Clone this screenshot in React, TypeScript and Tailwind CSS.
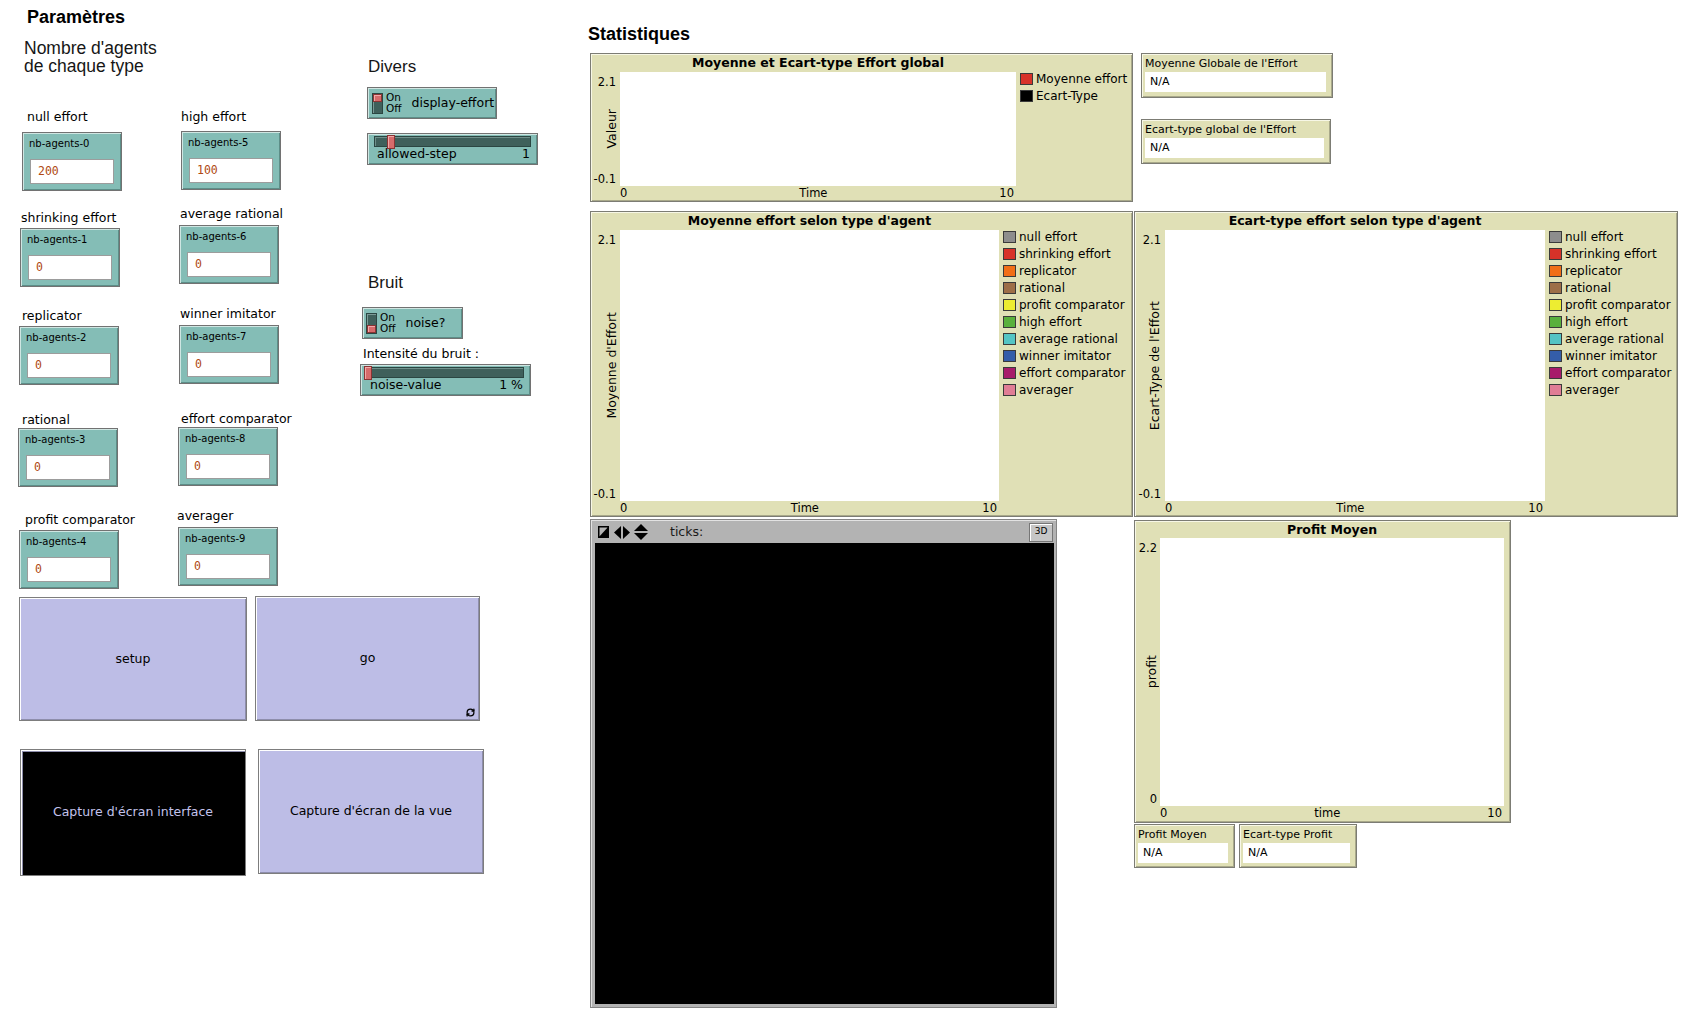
import { RefreshCw } from "lucide-react";

type AgentSpec = {
  title: string;
  name: string;
  value: string;
  labelCls: string;
  boxCls: string;
};

const leftAgents: AgentSpec[] = [
  { title: "null effort", name: "nb-agents-0", value: "200", labelCls: "mt-[34px] ml-[27px]", boxCls: "mt-[8px] ml-[22px]" },
  { title: "shrinking effort", name: "nb-agents-1", value: "0", labelCls: "mt-[20px] ml-[21px]", boxCls: "mt-[3px] ml-[20px]" },
  { title: "replicator", name: "nb-agents-2", value: "0", labelCls: "mt-[22px] ml-[22px]", boxCls: "mt-[3px] ml-[19px]" },
  { title: "rational", name: "nb-agents-3", value: "0", labelCls: "mt-[28px] ml-[22px]", boxCls: "mt-[1px] ml-[18px]" },
  { title: "profit comparator", name: "nb-agents-4", value: "0", labelCls: "mt-[26px] ml-[25px]", boxCls: "mt-[3px] ml-[19px]" },
];

const rightAgents: AgentSpec[] = [
  { title: "high effort", name: "nb-agents-5", value: "100", labelCls: "mt-[34px] ml-[4px]", boxCls: "mt-[7px] ml-[4px]" },
  { title: "average rational", name: "nb-agents-6", value: "0", labelCls: "mt-[17px] ml-[3px]", boxCls: "mt-[4px] ml-[2px]" },
  { title: "winner imitator", name: "nb-agents-7", value: "0", labelCls: "mt-[23px] ml-[3px]", boxCls: "mt-[4px] ml-[2px]" },
  { title: "effort comparator", name: "nb-agents-8", value: "0", labelCls: "mt-[28px] ml-[4px]", boxCls: "mt-[1px] ml-[1px]" },
  { title: "averager", name: "nb-agents-9", value: "0", labelCls: "mt-[23px] ml-[0px]", boxCls: "mt-[4px] ml-[1px]" },
];

// netlogo base colours, in the order of the plot pens
const agentPens: [string, string][] = [
  ["null effort", "bg-[#8d8d8d]"],
  ["shrinking effort", "bg-[#d73229]"],
  ["replicator", "bg-[#f16e17]"],
  ["rational", "bg-[#9d6e48]"],
  ["profit comparator", "bg-[#eded31]"],
  ["high effort", "bg-[#59b03c]"],
  ["average rational", "bg-[#54c4c4]"],
  ["winner imitator", "bg-[#345da9]"],
  ["effort comparator", "bg-[#a71b6a]"],
  ["averager", "bg-[#e07d95]"],
];

const teal = "bg-[#84bdb6] border border-[#727272] shadow-[inset_1px_1px_0_#cfe6e2,inset_-1px_-1px_0_#5d8e88]";
const khaki = "bg-[#e0e0b6] border border-[#7c7c74] shadow-[inset_1px_1px_0_#f7f7e6,inset_-1px_-1px_0_#a9a98a]";
const lilac = "bg-[#bdbde6] border border-[#7d7d7d] shadow-[inset_1px_1px_0_#ffffff,inset_-1px_-1px_0_#8e8eac]";

function AgentInput({ spec }: { spec: AgentSpec }) {
  return (
    <>
      <div className={`text-[12.5px] leading-[14px] whitespace-nowrap ${spec.labelCls}`}>{spec.title}</div>
      <div className={`w-[100px] h-[59px] ${teal} ${spec.boxCls}`}>
        <div className="pl-[6px] pt-[5px] text-[10px] leading-[12px]">{spec.name}</div>
        <div className="mx-[7px] mt-[9px] h-[25px] bg-white border border-[#9c9c9c] flex items-center pl-[7px] font-['DejaVu_Sans_Mono',monospace] text-[11.5px] text-[#b04a12]">
          {spec.value}
        </div>
      </div>
    </>
  );
}

function Toggle({ on }: { on: boolean }) {
  return (
    <div className="w-[11px] h-[21px] bg-[#3f605b] border border-[#2b4642] shadow-[inset_1px_1px_0_#7b9a96] flex flex-col">
      {on ? null : <div className="flex-1" />}
      <div className="h-[8px] bg-[#d66b6b] border border-[#8a3434] shadow-[inset_1px_1px_0_#f3a9a9]" />
    </div>
  );
}

function Switch({ on, name, className }: { on: boolean; name: string; className: string }) {
  return (
    <div className={`h-[32px] flex items-center ${teal} ${className}`}>
      <Toggle on={on} />
      <div className="ml-[3px] flex flex-col text-[10.5px] leading-[11.5px]">
        <span>On</span>
        <span>Off</span>
      </div>
      <div className="ml-[10px] text-[12.5px] leading-[14px]">{name}</div>
    </div>
  );
}

function Slider({ name, value, knobCls, className }: { name: string; value: string; knobCls: string; className: string }) {
  return (
    <div className={`h-[32px] w-[171px] ${teal} ${className}`}>
      <div className="relative mx-[6px] mt-[2px] h-[11px] bg-[#3f605b] border border-[#2b4642] shadow-[inset_1px_1px_0_#6f8f8a]">
        <div className={`absolute top-[-2px] w-[8px] h-[14px] bg-[#d66b6b] border border-[#8a3434] shadow-[inset_1px_1px_0_#f3a9a9] ${knobCls}`} />
      </div>
      <div className="mt-[0px] pl-[9px] pr-[7px] flex justify-between text-[12.5px] leading-[14px]">
        <span>{name}</span>
        <span>{value}</span>
      </div>
    </div>
  );
}

type PlotProps = {
  title: string;
  box: string;
  yCol: string;
  area: string;
  titleRow: string;
  yLabel: string;
  yLabelPad: string;
  tickPad: string;
  yMax: string;
  yMin: string;
  xLabel: string;
  legend?: [string, string][];
  className?: string;
};

function Plot(p: PlotProps) {
  return (
    <div className={`${p.box} ${khaki} flex flex-col ${p.className ?? ""}`}>
      <div className={`flex ${p.titleRow}`}>
        <div className={p.yCol} />
        <div className={`${p.area.split(" ")[0]} pt-[2px] text-center font-bold text-[12.5px] leading-[14px] whitespace-nowrap`}>
          {p.title}
        </div>
      </div>
      <div className="flex">
        <div className={`grid ${p.yCol}`}>
          <div className={`col-start-1 row-start-1 flex items-center ${p.yLabelPad}`}>
            <span className="[writing-mode:vertical-rl] rotate-180 text-[12.5px] leading-[14px] whitespace-nowrap">{p.yLabel}</span>
          </div>
          <div className={`col-start-1 row-start-1 flex flex-col justify-between items-end pt-[3px] text-[11.5px] leading-[14px] ${p.tickPad}`}>
            <span>{p.yMax}</span>
            <span>{p.yMin}</span>
          </div>
        </div>
        <div className={`${p.area} bg-white`} />
        {p.legend ? (
          <div className="ml-[4px] mt-[-2px] flex flex-col">
            {p.legend.map(([label, color]) => (
              <div key={label} className="h-[17px] flex items-center">
                <div className={`w-[13px] h-[12px] border border-[#3a3a3a] ${color}`} />
                <span className="ml-[3px] text-[12px] leading-[14px] whitespace-nowrap">{label}</span>
              </div>
            ))}
          </div>
        ) : null}
      </div>
      <div className="flex">
        <div className={p.yCol} />
        <div className={`${p.area.split(" ")[0]} pr-[2px] flex justify-between text-[11.5px] leading-[14px]`}>
          <span>0</span>
          <span>{p.xLabel}</span>
          <span>10</span>
        </div>
      </div>
    </div>
  );
}

function Monitor({ label, className }: { label: string; className: string }) {
  return (
    <div className={`${khaki} ${className}`}>
      <div className="pl-[3px] pt-[3px] text-[11px] leading-[13px] whitespace-nowrap">{label}</div>
      <div className="ml-[3px] mr-[6px] mt-[2px] h-[20px] bg-white pl-[5px] flex items-center text-[11px]">N/A</div>
    </div>
  );
}

function ViewHeader() {
  return (
    <div className="h-[22px] flex items-center">
      <svg className="ml-[3px]" width="11" height="12" viewBox="0 0 11 12">
        <rect x="0.75" y="0.75" width="9.5" height="10.5" fill="none" stroke="#000" strokeWidth="1.5" />
        <polygon points="11,0 11,12 0,12" fill="#000" />
      </svg>
      <svg className="ml-[5px]" width="16" height="13" viewBox="0 0 16 13">
        <polygon points="7,0 7,13 0,6.5" fill="#000" />
        <polygon points="9,0 9,13 16,6.5" fill="#000" />
      </svg>
      <svg className="ml-[4px]" width="14" height="16" viewBox="0 0 14 16">
        <polygon points="0,7 14,7 7,0" fill="#000" />
        <polygon points="0,9 14,9 7,16" fill="#000" />
      </svg>
      <span className="ml-[22px] text-[12.5px] leading-[14px] text-[#1a1a1a]">ticks:</span>
      <div className="flex-1" />
      <div className="mr-[1px] w-[24px] h-[19px] bg-[#c6c6c6] border border-[#767676] shadow-[inset_1px_1px_0_#ffffff] flex items-center justify-center text-[9px]">
        3D
      </div>
    </div>
  );
}

export default function App() {
  return (
    <div className="w-[1688px] h-[1020px] bg-white flex overflow-hidden font-['DejaVu_Sans',sans-serif] text-black">
      {/* parameters */}
      <div className="w-[588px] shrink-0">
        <div className="pt-[6px] pl-[27px] font-['Liberation_Sans',sans-serif] font-bold text-[18px] leading-[22px]">Paramètres</div>
        <div className="flex">
          <div className="w-[360px]">
            <div className="mt-[11px] pl-[24px] h-[37px] font-['Liberation_Sans',sans-serif] text-[17.5px] leading-[18.4px] text-[#161616]">
              Nombre d'agents
              <br />
              de chaque type
            </div>
            <div className="flex">
              <div className="w-[177px] flex flex-col items-start">
                {leftAgents.map((a) => (
                  <AgentInput key={a.name} spec={a} />
                ))}
              </div>
              <div className="flex flex-col items-start">
                {rightAgents.map((a) => (
                  <AgentInput key={a.name} spec={a} />
                ))}
              </div>
            </div>
          </div>
          <div className="flex flex-col items-start">
            <div className="mt-[29px] ml-[8px] font-['Liberation_Sans',sans-serif] text-[17px] leading-[20px] text-[#161616]">Divers</div>
            <Switch on name="display-effort" className="mt-[10px] ml-[7px] w-[130px] pl-[4px]" />
            <Slider name="allowed-step" value="1" knobCls="left-[12px]" className="mt-[14px] ml-[7px]" />
            <div className="mt-[108px] ml-[8px] font-['Liberation_Sans',sans-serif] text-[17px] leading-[20px] text-[#161616]">Bruit</div>
            <Switch on={false} name="noise?" className="mt-[14px] ml-[2px] w-[101px] pl-[3px]" />
            <div className="mt-[8px] ml-[3px] text-[12.5px] leading-[14px]">Intensité du bruit :</div>
            <Slider name="noise-value" value="1 %" knobCls="left-[-4px]" className="mt-[3px] ml-[0px]" />
          </div>
        </div>
        <div className="flex items-start">
          <div className={`mt-[8px] ml-[19px] w-[228px] h-[124px] ${lilac} flex items-center justify-center text-[12.5px]`}>setup</div>
          <div className={`relative mt-[7px] ml-[8px] w-[225px] h-[125px] ${lilac} flex items-center justify-center text-[12.5px]`}>
            go
            <RefreshCw className="absolute bottom-[3px] right-[4px]" size={9} strokeWidth={3.5} color="#000" />
          </div>
        </div>
        <div className="mt-[28px] flex items-start">
          <div className="ml-[20px] w-[226px] h-[127px] bg-black border border-[#7d7d7d] shadow-[inset_1px_1px_0_#ffffff,inset_2px_2px_0_#8e8eac] flex items-center justify-center text-[12.5px] text-[#c3c3ec]">
            Capture d'écran interface
          </div>
          <div className={`ml-[12px] w-[226px] h-[125px] ${lilac} flex items-center justify-center text-[12.5px]`}>
            Capture d'écran de la vue
          </div>
        </div>
      </div>

      {/* statistics */}
      <div className="flex-1">
        <div className="mt-[23px] font-['Liberation_Sans',sans-serif] font-bold text-[18px] leading-[22px]">Statistiques</div>

        <div className="mt-[8px] flex items-start">
          <Plot
            className="ml-[2px]"
            title="Moyenne et Ecart-type Effort global"
            box="w-[543px] h-[149px]"
            yCol="w-[29px]"
            area="w-[396px] h-[114px]"
            titleRow="h-[18px]"
            yLabel="Valeur"
            yLabelPad="pl-[14px]"
            tickPad="pr-[4px]"
            yMax="2.1"
            yMin="-0.1"
            xLabel="Time"
            legend={[
              ["Moyenne effort", "bg-[#d73229]"],
              ["Ecart-Type", "bg-black"],
            ]}
          />
          <div className="ml-[8px] flex flex-col items-start">
            <Monitor label="Moyenne Globale de l'Effort" className="w-[192px] h-[45px]" />
            <Monitor label="Ecart-type global de l'Effort" className="mt-[21px] w-[190px] h-[45px]" />
          </div>
        </div>

        <div className="mt-[9px] flex items-start">
          <Plot
            className="ml-[2px]"
            title="Moyenne effort selon type d'agent"
            box="w-[543px] h-[306px]"
            yCol="w-[29px]"
            area="w-[379px] h-[271px]"
            titleRow="h-[18px]"
            yLabel="Moyenne d'Effort"
            yLabelPad="pl-[14px]"
            tickPad="pr-[4px]"
            yMax="2.1"
            yMin="-0.1"
            xLabel="Time"
            legend={agentPens}
          />
          <Plot
            className="ml-[1px]"
            title="Ecart-type effort selon type d'agent"
            box="w-[544px] h-[306px]"
            yCol="w-[30px]"
            area="w-[380px] h-[271px]"
            titleRow="h-[18px]"
            yLabel="Ecart-Type de l'Effort"
            yLabelPad="pl-[13px]"
            tickPad="pr-[4px]"
            yMax="2.1"
            yMin="-0.1"
            xLabel="Time"
            legend={agentPens}
          />
        </div>

        <div className="mt-[2px] flex items-start">
          <div className="ml-[2px] w-[467px] h-[489px] bg-[#b3b3b3] border border-[#858585] shadow-[inset_1px_1px_0_#e2e2e2] pl-[4px] pr-[2px] pt-[1px] pb-[3px] flex flex-col">
            <ViewHeader />
            <div className="flex-1 bg-black" />
          </div>
          <div className="ml-[77px] flex flex-col items-start">
            <Plot
              className="mt-[1px]"
              title="Profit Moyen"
              box="w-[377px] h-[303px]"
              yCol="w-[25px]"
              area="w-[344px] h-[268px]"
              titleRow="h-[17px]"
              yLabel="profit"
              yLabelPad="pl-[10px]"
              tickPad="pr-[3px]"
              yMax="2.2"
              yMin="0"
              xLabel="time"
            />
            <div className="mt-[1px] flex">
              <Monitor label="Profit Moyen" className="w-[101px] h-[44px]" />
              <Monitor label="Ecart-type Profit" className="ml-[4px] w-[118px] h-[44px]" />
            </div>
          </div>
        </div>
      </div>
    </div>
  );
}
